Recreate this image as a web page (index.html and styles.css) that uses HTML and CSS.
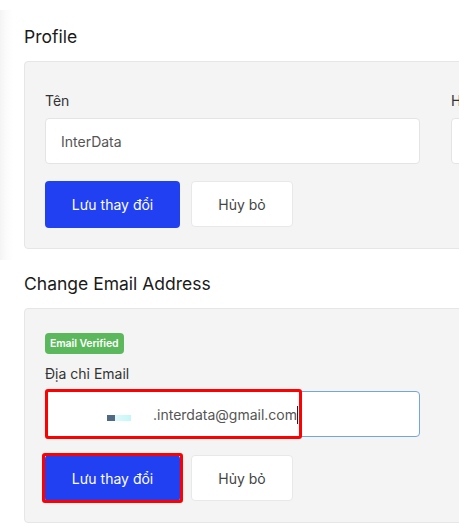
FILE: index.html
```html
<html>
	<head>
		<title>Profile</title>
		<link rel="stylesheet" href="styles.css">
	</head>
	<body>
		<div class="page">

			<h2 class="title">Profile</h2>
			<div class="card card-profile">
				<div class="row">
					<div class="col">
						<label class="label">Tên</label>
						<div class="field">InterData</div>
					</div>
					<div class="col">
						<label class="label">Họ</label>
						<div class="field"></div>
					</div>
				</div>
				<div class="actions">
					<button class="btn btn-save">Lưu thay đổi</button>
					<button class="btn btn-cancel">Hủy bỏ</button>
				</div>
			</div>

			<h2 class="title title-email">Change Email Address</h2>
			<div class="card card-email">
				<span class="badge">Email Verified</span>
				<div class="col">
					<label class="label">Địa chỉ Email</label>
					<div class="email-wrap">
						<div class="field field-focus">
							<span class="mask"><i class="px-dark"></i><i class="px-light"></i></span>
							<span class="email-text">.interdata@gmail.com</span><span class="caret"></span>
						</div>
						<!-- red highlight drawn over the input -->
						<div class="mark mark-input"></div>
					</div>
				</div>
				<div class="actions">
					<div class="btn-wrap">
						<button class="btn btn-save">Lưu thay đổi</button>
						<div class="mark mark-btn"></div>
					</div>
					<button class="btn btn-cancel">Hủy bỏ</button>
				</div>
			</div>

		</div>
	</body>
</html>
```

FILE: styles.css
```css
html, body {
	margin: 0;
	overflow: hidden;
}

body {
	background-color: #fff;
	background-image: linear-gradient(to right, #f4f4f4 0, #fbfbfb 6px, #fff 13px);
	background-repeat: no-repeat;
	background-size: 13px 250px;
	background-position: 0 10px;
	font-family: Inter, "Noto Sans", sans-serif;
	color: #333;
}

.page {
	padding: 25px 0 0 24px;
	width: 900px;
}

.title {
	margin: 0 0 12px 0;
	font-size: 17.5px;
	line-height: 24px;
	font-weight: 400;
	color: #1a1a1a;
}

.title-email {
	margin-top: 23px;
}

/* grey boxes */
.card {
	background-color: #f4f4f4;
	border: 1px solid #e6e6e6;
	border-radius: 4px;
	padding: 29px 20px 20px 20px;
}

.card-email {
	padding-top: 24px;
}

.row {
	display: grid;
	grid-template-columns: 375px 375px;
	column-gap: 31px;
}

.col {
	display: flex;
	flex-direction: column;
	width: 375px;
}

.label {
	font-size: 14px;
	line-height: 20px;
	color: #333;
	margin-bottom: 7px;
}

.field {
	box-sizing: border-box;
	height: 46px;
	background-color: #fff;
	border: 1px solid #e4e4e4;
	border-radius: 4px;
	padding: 0 15px;
	display: flex;
	align-items: center;
	font-size: 14px;
	color: #555;
}

.field-focus {
	border-color: #72a6dd;
	padding-left: 61px;
}

.mask {
	display: flex;
	margin-top: 8px;
	margin-right: 22px;
}

.mask i {
	display: block;
	height: 6px;
}

.px-dark {
	width: 8px;
	background-color: #4f6a82;
}

.px-light {
	width: 16px;
	background: linear-gradient(to right, #dff9fb, #c4f7f8);
}

.email-text {
	color: #555;
}

.caret {
	display: block;
	width: 1px;
	height: 18px;
	background-color: #222;
	margin-top: 2px;
}

.actions {
	display: flex;
	gap: 11px;
	margin-top: 17px;
}

.card-email .actions {
	margin-top: 18px;
}

.btn {
	box-sizing: border-box;
	height: 47px;
	border-radius: 4px;
	font-family: Inter, "Noto Sans", sans-serif;
	font-size: 14px;
	cursor: pointer;
}

.btn-save {
	width: 135px;
	background-color: #2040f2;
	border: none;
	color: #fff;
}

.btn-cancel {
	width: 102px;
	height: 46px;
	background-color: #fff;
	border: 1px solid #e8e8e8;
	color: #444;
}

.badge {
	display: inline-block;
	align-self: flex-start;
	background-color: #5cb85c;
	color: #fff;
	font-size: 10.5px;
	font-weight: 600;
	line-height: 21px;
	height: 21px;
	padding: 0 5px;
	border-radius: 4px;
	margin-bottom: 10px;
	letter-spacing: -0.1px;
}

.email-wrap, .btn-wrap {
	position: relative;
}

.mark {
	position: absolute;
	border: 3px solid #ff0000;
	border-radius: 3px;
}

.mark-input {
	left: 0;
	top: -2px;
	width: 251px;
	height: 44px;
}

.mark-btn {
	left: -3px;
	top: -2px;
	width: 135px;
	height: 44px;
}
```
